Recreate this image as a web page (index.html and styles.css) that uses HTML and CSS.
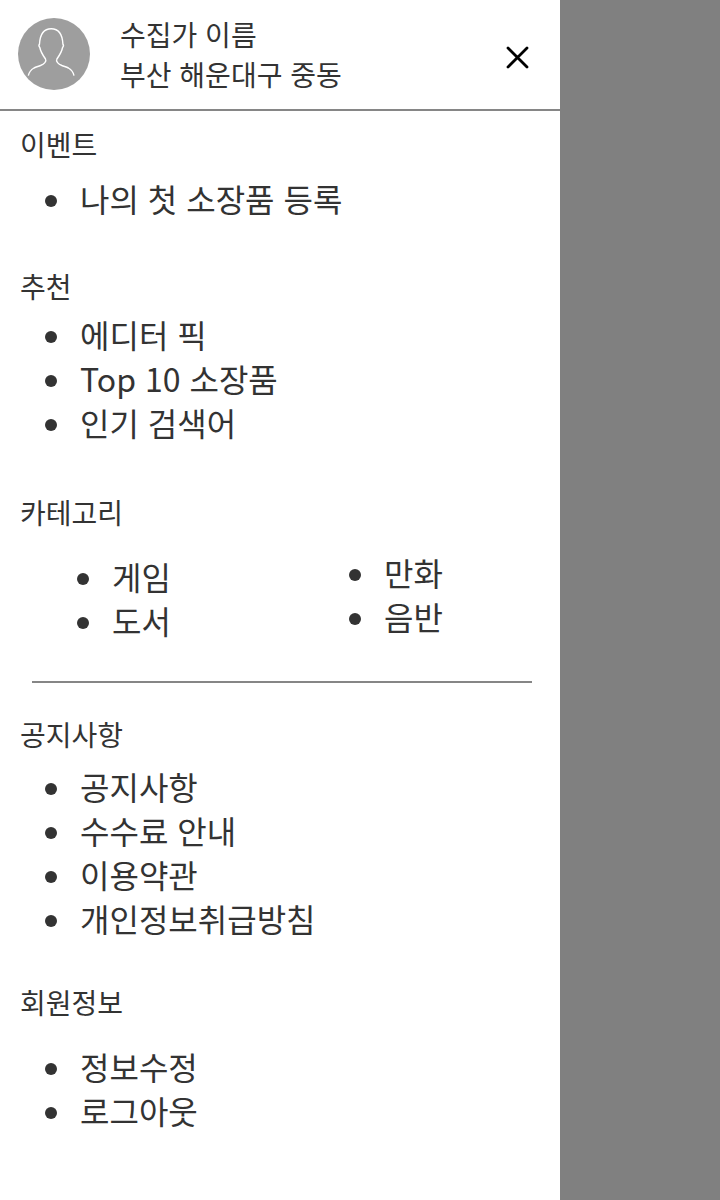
FILE: index.html
```
<!DOCTYPE html>
<html lang="ko">
<head>
<meta charset="utf-8">
<meta name="viewport" content="width=device-width, initial-scale=1">
<title>메뉴</title>
<link rel="stylesheet" href="styles.css">
</head>
<body>
<aside class="drawer">
  <header class="profile">
    <svg class="avatar" viewBox="0 0 72 72" aria-hidden="true">
      <circle cx="36" cy="36" r="36" fill="#9e9e9e"/>
      <path d="M10.3 57.7C11 54.500 13 51.700 16 50C18 49 20 48.500 22.500 47.500C26 46 29 43.500 27.500 41C25 37.500 22.500 33 21.800 29.500C20.800 28.500 20.800 27 21.500 26C22 16.500 26 10.700 33.200 10.700C40.400 10.700 44.400 16.500 44.900 26C45.600 27 45.600 28.500 44.600 29.500C43.900 33 41.400 37.500 38.900 41C37.400 43.500 40.400 46 43.900 47.500C46.400 48.500 48.400 49 50.400 50C53.400 51.700 55.400 54.500 56 57.700" fill="none" stroke="#fff" stroke-width="1.4"/>
    </svg>
    <div class="who">
      <p>수집가 이름</p>
      <p>부산 해운대구 중동</p>
    </div>
    <button class="close" type="button" aria-label="닫기">
      <svg viewBox="0 0 24 24" aria-hidden="true"><path d="M3 3L22 22M22 3L3 22" stroke="#000" stroke-width="2.8" stroke-linecap="round"/></svg>
    </button>
  </header>
  <nav class="menu">
    <section class="event">
      <h2>이벤트</h2>
      <ul><li><a href="#">나의 첫 소장품 등록</a></li></ul>
    </section>
    <section class="picks">
      <h2>추천</h2>
      <ul><li><a href="#">에디터 픽</a></li><li><a href="#">Top 10 소장품</a></li><li><a href="#">인기 검색어</a></li></ul>
    </section>
    <section class="category">
      <h2>카테고리</h2>
      <div class="columns">
        <ul><li><a href="#">게임</a></li><li><a href="#">도서</a></li></ul>
        <ul><li><a href="#">만화</a></li><li><a href="#">음반</a></li></ul>
      </div>
    </section>
    <hr>
    <section class="notice">
      <h2>공지사항</h2>
      <ul><li><a href="#">공지사항</a></li><li><a href="#">수수료 안내</a></li><li><a href="#">이용약관</a></li><li><a href="#">개인정보취급방침</a></li></ul>
    </section>
    <section class="account">
      <h2>회원정보</h2>
      <ul><li><a href="#">정보수정</a></li><li><a href="#">로그아웃</a></li></ul>
    </section>
  </nav>
</aside>
</body>
</html>
```
FILE: styles.css
```
* { box-sizing: border-box; margin: 0; padding: 0; }
body {
  background: #808080;
  color: #333;
  font-family: "Noto Sans CJK KR", sans-serif;
}
.drawer { width: 77.778%; min-height: 100vh; background: #fff; }
.profile {
  display: flex;
  align-items: flex-start;
  padding: 14px 28px 15px 18px;
  border-bottom: 2px solid #868686;
}
.avatar { width: 72px; height: 72px; margin-top: 4px; flex: none; }
.who { flex: 1; margin-left: 30px; font-size: 28px; line-height: 40px; }
.close {
  width: 30px;
  height: 30px;
  margin-top: 28px;
  padding: 3px;
  border: 0;
  background: none;
  cursor: pointer;
}
.close svg { display: block; width: 24px; height: 24px; }
.menu { padding: 13px 20px; }
h2 { font-size: 28px; font-weight: 400; line-height: 40px; }
ul { list-style: none; padding-left: 25px; }
li {
  display: flex;
  align-items: center;
  gap: 23px;
  font-size: 32px;
  line-height: 38px;
}
li::before {
  content: "";
  flex: none;
  width: 12px;
  height: 12px;
  border-radius: 50%;
  background: #333;
}
a { padding-bottom: 6px; color: inherit; text-decoration: none; }
.event ul { margin-top: 15px; }
.picks { margin-top: 43px; }
.picks ul { margin-top: 9px; }
.category { margin-top: 45px; }
.columns { display: grid; grid-template-columns: 272px 1fr; margin: 21px 0 0 32px; }
.columns ul:first-child { padding-top: 4px; }
hr { margin: 36px 8px 31px 12px; border: 0; border-top: 2px solid #868686; }
.notice ul { margin-top: 13px; }
.account { margin-top: 39px; }
.account ul { margin-top: 25px; }
```
